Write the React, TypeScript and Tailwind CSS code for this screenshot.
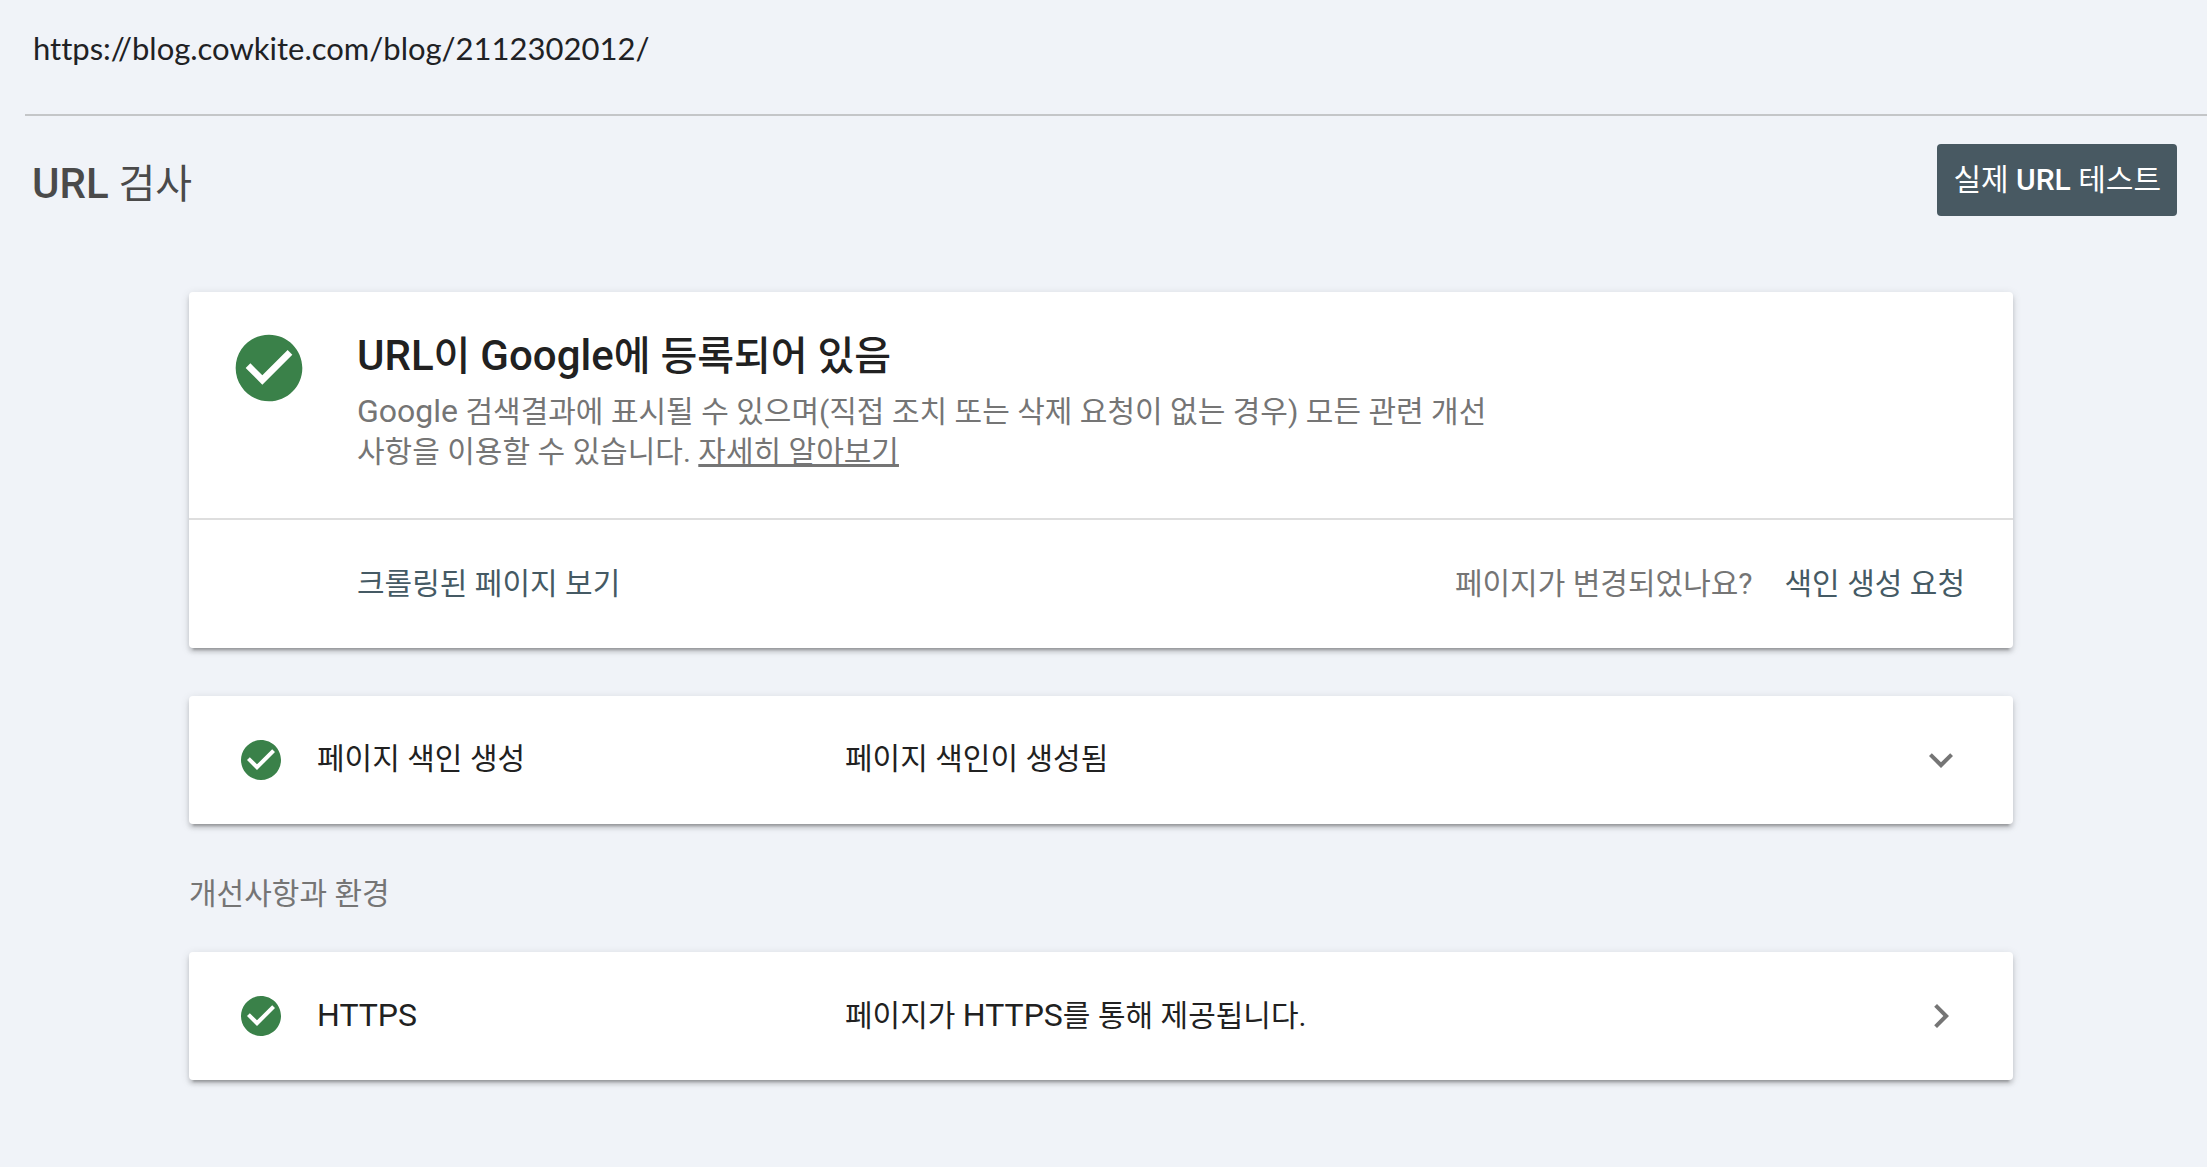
import type { ReactNode } from "react";

const cardClass =
  "rounded bg-white shadow-[0_6px_2px_-4px_rgba(0,0,0,0.2),0_4px_4px_0_rgba(0,0,0,0.14),0_2px_10px_0_rgba(0,0,0,0.12)]";

function CheckCircle({ className }: { className: string }) {
  return (
    <svg viewBox="0 0 24 24" className={className} aria-hidden="true">
      <path
        fill="#3a8149"
        d="M12 2C6.48 2 2 6.48 2 12s4.48 10 10 10 10-4.48 10-10S17.52 2 12 2zm-2 15l-5-5 1.41-1.41L10 14.17l7.59-7.59L19 8l-9 9z"
      />
    </svg>
  );
}

function Chevron({ direction }: { direction: "down" | "right" }) {
  return (
    <svg viewBox="0 0 24 24" className="size-12 shrink-0" aria-hidden="true">
      <path
        fill="#757575"
        d={
          direction === "down"
            ? "M16.59 8.59L12 13.17 7.41 8.59 6 10l6 6 6-6z"
            : "M10 6L8.59 7.41 13.17 12l-4.58 4.59L10 18l6-6z"
        }
      />
    </svg>
  );
}

function Latin({ children }: { children: ReactNode }) {
  return <span className="text-[32px]">{children}</span>;
}

function TitleLatin({ children }: { children: ReactNode }) {
  return <span className="text-[42px] font-medium">{children}</span>;
}

function StatusRow({
  label,
  value,
  direction,
}: {
  label: ReactNode;
  value: ReactNode;
  direction: "down" | "right";
}) {
  return (
    <button
      type="button"
      className={`flex h-32 w-full items-center px-12 text-left text-[30px] leading-10 text-[#212121] ${cardClass}`}
    >
      <CheckCircle className="size-12 shrink-0" />
      <span className="ml-8 w-[528px] shrink-0 pb-0.5">{label}</span>
      <span className="grow pb-0.5">{value}</span>
      <Chevron direction={direction} />
    </button>
  );
}

export default function App() {
  return (
    <div className="min-h-screen bg-[#f0f3f8] pb-20 font-[Roboto,'Noto_Sans_CJK_KR',sans-serif]">
      <header className="ml-[25px] flex h-[116px] items-start border-b-2 border-[#c4c6c8] px-2 pt-7">
        <p className="font-[Lato,sans-serif] text-[31px] leading-10 text-[#202124] [font-variant-ligatures:none]">
          https://blog.cowkite.com/blog/2112302012/
        </p>
      </header>

      <div className="flex h-26 items-start justify-between pt-7 pr-[30px] pl-8">
        <h1 className="pt-1 text-[40px] leading-[72px] text-[#4a4a4a]">
          <TitleLatin>URL</TitleLatin> 검사
        </h1>
        <button
          type="button"
          className="h-18 rounded bg-[#485962] px-4 text-[30px] leading-10 text-white"
        >
          실제 <span className="font-medium">URL</span> 테스트
        </button>
      </div>

      <main className="mt-18 pr-[194px] pl-[189px]">
        <section className={cardClass}>
          <div className="flex h-[228px] items-start gap-12 border-b-2 border-[#dedede] pt-9 pl-10">
            <CheckCircle className="size-20 shrink-0" />
            <div>
              <h2 className="text-[40px] leading-14 font-medium text-[#212121]">
                <TitleLatin>URL</TitleLatin>이 <TitleLatin>Google</TitleLatin>에 등록되어 있음
              </h2>
              <p className="mt-1.5 max-w-[1160px] text-[30px] leading-10 text-[#757575]">
                <Latin>Google</Latin> 검색결과에 표시될 수 있으며(직접 조치 또는 삭제 요청이 없는
                경우) 모든 관련 개선
                <br />
                사항을 이용할 수 있습니다.{" "}
                <a href="#learn-more" className="underline">
                  자세히 알아보기
                </a>
              </p>
            </div>
          </div>
          <div className="flex h-32 items-center justify-between pr-12 pl-[168px]">
            <button type="button" className="text-[30px] leading-10 text-[#455a64]">
              크롤링된 페이지 보기
            </button>
            <div className="flex items-center gap-8">
              <span className="text-[30px] leading-10 text-[#757575]">페이지가 변경되었나요?</span>
              <button type="button" className="text-[30px] leading-10 text-[#455a64]">
                색인 생성 요청
              </button>
            </div>
          </div>
        </section>

        <div className="mt-12">
          <StatusRow label="페이지 색인 생성" value="페이지 색인이 생성됨" direction="down" />
        </div>

        <h3 className="mt-[50px] mb-[38px] text-[30px] leading-10 text-[#757575]">
          개선사항과 환경
        </h3>

        <StatusRow
          label={<Latin>HTTPS</Latin>}
          value={
            <>
              페이지가 <Latin>HTTPS</Latin>를 통해 제공됩니다.
            </>
          }
          direction="right"
        />
      </main>
    </div>
  );
}
